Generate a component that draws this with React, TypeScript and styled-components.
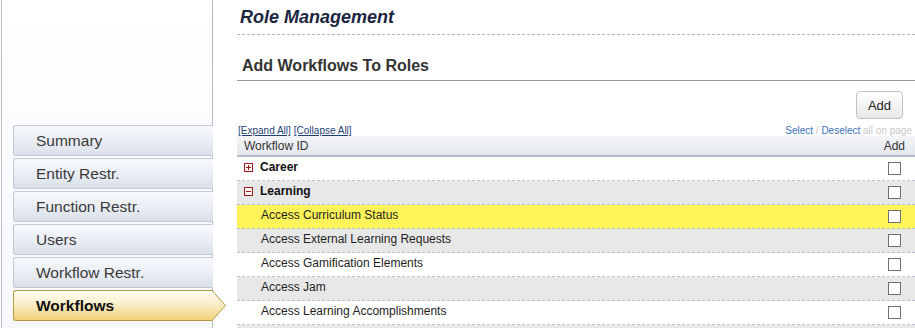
import React from 'react';
import styled, { createGlobalStyle } from 'styled-components';

const GlobalStyle = createGlobalStyle`
  html, body {
    margin: 0;
    padding: 0;
    background: #ffffff;
    font-family: "Liberation Sans", Arial, sans-serif;
    overflow: hidden;
  }
`;

const Page = styled.div`
  display: flex;
  height: 328px;
  overflow: hidden;
`;

const Sidebar = styled.div`
  width: 210px;
  margin-left: 1px;
  border-left: 1px solid #b9bcc2;
  border-right: 1px solid #b9bcc2;
  background: linear-gradient(#ffffff, #f6f8fc);
  padding-top: 125px;
  display: flex;
  flex-direction: column;
  gap: 2px;
  flex-shrink: 0;
`;

const NavItem = styled.div<{ $active?: boolean }>`
  position: relative;
  height: 31px;
  margin-left: 11px;
  margin-right: -1px;
  box-sizing: border-box;
  display: flex;
  align-items: center;
  padding-left: 22px;
  font-size: 15.5px;
  color: ${(p) => (p.$active ? '#111' : '#3a3a3a')};
  font-weight: ${(p) => (p.$active ? 700 : 400)};
  border: 1px solid ${(p) => (p.$active ? '#b59a3c' : '#c3cad6')};
  border-right: none;
  border-radius: 3px 0 0 3px;
  background: ${(p) =>
    p.$active
      ? 'linear-gradient(#fffdf6 0%, #faeec8 45%, #f0d27a 100%)'
      : 'linear-gradient(#f7f9fc 0%, #e9edf3 55%, #d9e0ea 100%)'};
  z-index: ${(p) => (p.$active ? 2 : 1)};
`;

const ArrowTip = styled.svg`
  position: absolute;
  right: -14px;
  top: -1px;
  width: 15px;
  height: 31px;
`;

const Main = styled.div`
  flex: 1;
  padding-left: 24px;
  min-width: 0;
`;

const Title = styled.h1`
  margin: 0;
  padding: 7px 0 0 3px;
  height: 27px;
  font-size: 18px;
  font-style: italic;
  font-weight: 700;
  color: #1b2540;
  border-bottom: 1px dashed #a9b7cc;
`;

const SectionTitle = styled.h2`
  margin: 0;
  padding: 22px 0 0 5px;
  height: 23px;
  font-size: 16px;
  font-weight: 700;
  color: #333;
  border-bottom: 1px solid #9a9a9a;
`;

const ButtonBar = styled.div`
  display: flex;
  justify-content: flex-end;
  padding: 10px 12px 0 0;
`;

const AddButton = styled.button`
  width: 47px;
  height: 28px;
  font-family: "Liberation Sans", Arial, sans-serif;
  font-size: 13px;
  color: #222;
  border: 1px solid #c2c2c2;
  border-radius: 4px;
  background: linear-gradient(#ffffff, #e9e9e9);
  padding: 0;
`;

const LinkBar = styled.div`
  display: flex;
  justify-content: space-between;
  align-items: flex-end;
  height: 17px;
  font-size: 10px;
  padding-left: 1px;
`;

const ExpandLink = styled.a`
  color: #1d3f73;
  text-decoration: underline;
  margin-right: 3px;
`;

const SelectLinks = styled.div`
  color: #c8c8c8;
  padding-right: 3px;
`;

const SelectLink = styled.a`
  color: #3c6fb8;
  text-decoration: none;
`;

const HeaderRow = styled.div`
  display: flex;
  align-items: center;
  justify-content: space-between;
  height: 19px;
  padding: 0 10px 0 7px;
  font-size: 12px;
  color: #333;
  background: linear-gradient(#f3f5f8, #e4e7ec);
  border-bottom: 2px solid #b3b9c6;
`;

const Row = styled.div<{ $bg: string }>`
  display: flex;
  align-items: center;
  height: 23px;
  padding: 0 14px 0 7px;
  font-size: 12px;
  color: #1e1e1e;
  background: ${(p) => p.$bg};
  border-bottom: 1px dashed #b5c3d8;
`;

const Toggle = styled.svg`
  width: 9px;
  height: 9px;
  margin-right: 7px;
  margin-bottom: 3px;
  flex-shrink: 0;
`;

const GroupLabel = styled.span`
  font-weight: 700;
  color: #111;
  flex: 1;
  margin-bottom: 4px;
`;

const ItemLabel = styled.span`
  padding-left: 17px;
  flex: 1;
  margin-bottom: 4px;
`;

const CheckBox = styled.span`
  width: 11px;
  height: 11px;
  border: 1px solid #707070;
  background: #fff;
  flex-shrink: 0;
`;

type Line =
  | { kind: 'group'; label: string; open: boolean; bg: string }
  | { kind: 'item'; label: string; bg: string };

const lines: Line[] = [
  { kind: 'group', label: 'Career', open: false, bg: '#ffffff' },
  { kind: 'group', label: 'Learning', open: true, bg: '#e8e8e8' },
  { kind: 'item', label: 'Access Curriculum Status', bg: '#fff35a' },
  { kind: 'item', label: 'Access External Learning Requests', bg: '#e8e8e8' },
  { kind: 'item', label: 'Access Gamification Elements', bg: '#ffffff' },
  { kind: 'item', label: 'Access Jam', bg: '#e8e8e8' },
  { kind: 'item', label: 'Access Learning Accomplishments', bg: '#ffffff' },
  { kind: 'group', label: 'Reports', open: true, bg: '#e8e8e8' },
];

const navItems = ['Summary', 'Entity Restr.', 'Function Restr.', 'Users', 'Workflow Restr.', 'Workflows'];

const ToggleIcon: React.FC<{ open: boolean }> = ({ open }) => (
  <Toggle viewBox="0 0 9 9">
    <rect x="0.5" y="0.5" width="8" height="8" fill="#fff" stroke="#a01818" />
    <line x1="2" y1="4.5" x2="7" y2="4.5" stroke="#a01818" />
    {!open && <line x1="4.5" y1="2" x2="4.5" y2="7" stroke="#a01818" />}
  </Toggle>
);

const App: React.FC = () => {
  return (
    <>
      <GlobalStyle />
      <Page>
        <Sidebar>
          {navItems.map((name, i) => {
            const active = i === navItems.length - 1;
            return (
              <NavItem key={name} $active={active}>
                {name}
                {active && (
                  <ArrowTip viewBox="0 0 15 31">
                    <defs>
                      <linearGradient id="tipGrad" x1="0" y1="0" x2="0" y2="1">
                        <stop offset="0" stopColor="#fffdf6" />
                        <stop offset="0.45" stopColor="#faeec8" />
                        <stop offset="1" stopColor="#f0d27a" />
                      </linearGradient>
                    </defs>
                    <path d="M0 0.5 L13.5 15.5 L0 30.5 Z" fill="url(#tipGrad)" />
                    <path d="M0 0.5 L13.5 15.5 L0 30.5" fill="none" stroke="#b59a3c" />
                  </ArrowTip>
                )}
              </NavItem>
            );
          })}
        </Sidebar>

        <Main>
          <Title>Role Management</Title>
          <SectionTitle>Add Workflows To Roles</SectionTitle>
          <ButtonBar>
            <AddButton>Add</AddButton>
          </ButtonBar>
          <LinkBar>
            <div>
              <ExpandLink>[Expand All]</ExpandLink>
              <ExpandLink>[Collapse All]</ExpandLink>
            </div>
            <SelectLinks>
              <SelectLink>Select</SelectLink> / <SelectLink>Deselect</SelectLink> all on page
            </SelectLinks>
          </LinkBar>
          <HeaderRow>
            <span>Workflow ID</span>
            <span>Add</span>
          </HeaderRow>
          {lines.map((line) => (
            <Row key={line.label} $bg={line.bg}>
              {line.kind === 'group' ? (
                <>
                  <ToggleIcon open={line.open} />
                  <GroupLabel>{line.label}</GroupLabel>
                </>
              ) : (
                <ItemLabel>{line.label}</ItemLabel>
              )}
              <CheckBox />
            </Row>
          ))}
        </Main>
      </Page>
    </>
  );
};

export default App;
